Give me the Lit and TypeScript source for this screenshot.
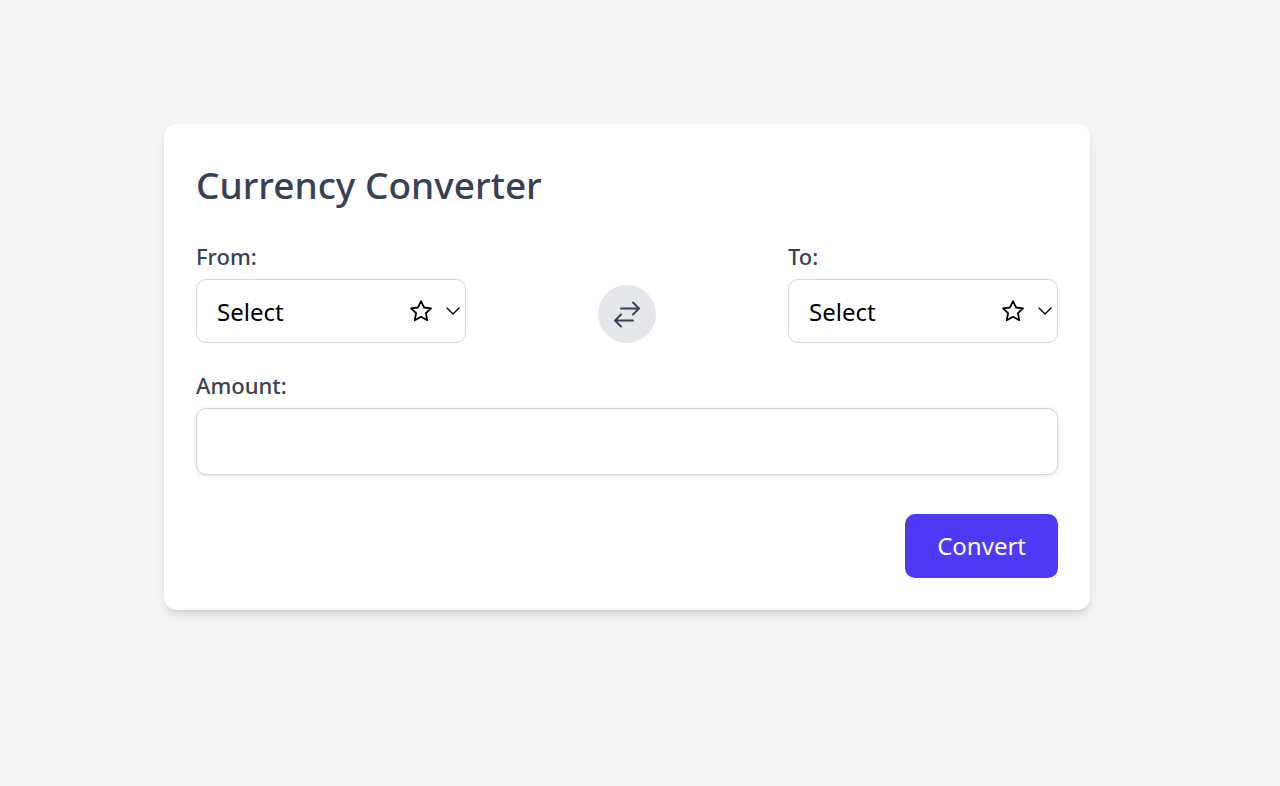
import { LitElement, html, css } from "lit";
import { customElement, property, state } from "lit/decorators.js";

const CURRENCIES = ["USD", "EUR", "GBP", "JPY", "CAD"];

@customElement("currency-select")
class CurrencySelect extends LitElement {
  @property() label = "";
  @property() value = "";

  static styles = css`
    :host {
      display: block;
    }
    .label {
      display: block;
      margin-bottom: 7px;
      color: #364153;
      font-size: 22px;
      font-weight: 500;
      line-height: 32px;
    }
    .field {
      position: relative;
    }
    .select {
      display: block;
      box-sizing: border-box;
      width: 100%;
      height: 64px;
      margin: 0;
      padding: 0 64px 0 20px;
      appearance: none;
      border: 1px solid #d1d5dc;
      border-radius: 10px;
      background: #fff;
      color: #000;
      font: inherit;
      font-size: 24px;
    }
    .icons {
      position: absolute;
      inset: 0 5px 0 auto;
      display: flex;
      align-items: center;
      gap: 12px;
      pointer-events: none;
    }
    .icon {
      display: block;
      fill: none;
      stroke: #000;
      stroke-linecap: round;
      stroke-linejoin: round;
    }
  `;

  private onChange(e: Event) {
    this.value = (e.target as HTMLSelectElement).value;
    this.dispatchEvent(new CustomEvent("pick", { detail: this.value }));
  }

  render() {
    return html`
      <label class="label" for="currency">${this.label}</label>
      <div class="field">
        <select class="select" id="currency" .value=${this.value} @change=${this.onChange}>
          <option value="">Select</option>
          ${CURRENCIES.map((c) => html`<option value=${c} ?selected=${c === this.value}>${c}</option>`)}
        </select>
        <span class="icons">
          <svg class="icon" width="24" height="24" viewBox="0 0 24 24" stroke-width="1.8" aria-hidden="true">
            <path d="M12 2.2 15 8.5 22 9.3 16.9 14.2 18.2 21.2 12 17.8 5.8 21.2 7.1 14.2 2 9.3 9 8.5Z" />
          </svg>
          <svg class="icon" width="16" height="16" viewBox="0 0 16 16" stroke-width="1.4" aria-hidden="true">
            <path d="M2 5 8 11 14 5" />
          </svg>
        </span>
      </div>
    `;
  }
}

@customElement("app-root")
class AppRoot extends LitElement {
  @state() private from = "";
  @state() private to = "";

  static styles = css`
    :host {
      display: flex;
      justify-content: center;
      align-items: flex-start;
      box-sizing: border-box;
      min-height: 100vh;
      padding: 124px 26px 32px 0;
      background: #f3f4f6;
      font-family: "Segoe UI", "Noto Sans", sans-serif;
    }
    .card {
      box-sizing: border-box;
      width: 100%;
      max-width: 926px;
      padding: 32px;
      border-radius: 13px;
      background: #fff;
      box-shadow: 0 6px 10px -1px rgb(0 0 0 / 0.1), 0 3px 6px -3px rgb(0 0 0 / 0.1);
    }
    .title {
      margin: 0 0 26px;
      color: #364153;
      font-size: 37px;
      font-weight: 500;
      line-height: 58px;
    }
    .row {
      display: grid;
      grid-template-columns: repeat(3, 1fr);
      gap: 26px;
      align-items: end;
      margin-bottom: 26px;
    }
    .swap {
      display: flex;
      justify-content: center;
      align-items: center;
      justify-self: center;
      width: 58px;
      height: 58px;
      margin: 0;
      padding: 0;
      border: 0;
      border-radius: 50%;
      background: #e5e7eb;
      cursor: pointer;
    }
    .arrows {
      fill: none;
      stroke: #364153;
      stroke-width: 2;
      stroke-linecap: round;
      stroke-linejoin: round;
    }
    .label {
      display: block;
      margin-bottom: 7px;
      color: #364153;
      font-size: 22px;
      font-weight: 500;
      line-height: 32px;
    }
    .amount {
      display: block;
      box-sizing: border-box;
      width: 100%;
      height: 67px;
      margin: 0 0 39px;
      padding: 0 20px;
      border: 1px solid #d1d5dc;
      border-radius: 10px;
      background: #fff;
      box-shadow: 0 1px 4px rgb(0 0 0 / 0.12);
      font: inherit;
      font-size: 24px;
    }
    .actions {
      display: flex;
      justify-content: flex-end;
    }
    .convert {
      margin: 0;
      padding: 13px 32px;
      border: 0;
      border-radius: 10px;
      background: #4f39f6;
      color: #fff;
      font: inherit;
      font-size: 24px;
      line-height: 38px;
      cursor: pointer;
    }
  `;

  private swap() {
    [this.from, this.to] = [this.to, this.from];
  }

  render() {
    return html`
      <form class="card" @submit=${(e: Event) => e.preventDefault()}>
        <h2 class="title">Currency Converter</h2>
        <div class="row">
          <currency-select
            label="From:"
            .value=${this.from}
            @pick=${(e: CustomEvent) => (this.from = e.detail)}
          ></currency-select>
          <button class="swap" type="button" aria-label="Swap currencies" @click=${this.swap}>
            <svg class="arrows" width="30" height="30" viewBox="0 0 30 30" aria-hidden="true">
              <path d="M9 9.5H27M21 3.5 27 9.5 21 15.5M21 21.5H3M9 15.5 3 21.5 9 27.5" />
            </svg>
          </button>
          <currency-select
            label="To:"
            .value=${this.to}
            @pick=${(e: CustomEvent) => (this.to = e.detail)}
          ></currency-select>
        </div>
        <label class="label" for="amount">Amount:</label>
        <input class="amount" id="amount" type="text" inputmode="decimal" />
        <div class="actions">
          <button class="convert" type="submit">Convert</button>
        </div>
      </form>
    `;
  }
}
